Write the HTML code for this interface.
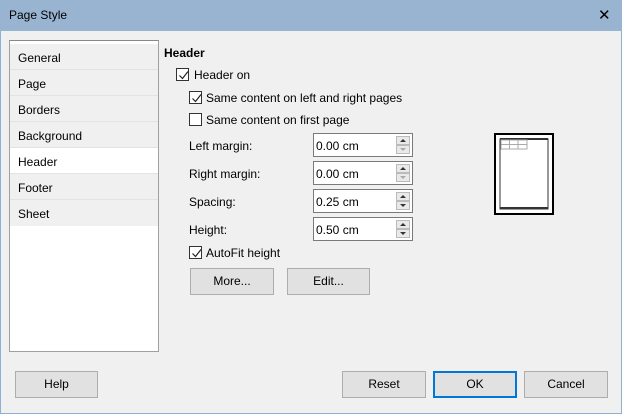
<!DOCTYPE html>
<html><head><style>
*{box-sizing:border-box;margin:0;padding:0}
body{width:622px;height:414px;background:#f0f0f0;font-family:"Liberation Sans",sans-serif;font-size:12px;color:#000;position:relative;overflow:hidden}
.win{position:absolute;left:0;top:0;width:622px;height:414px;border:1px solid #8fb0d6}
.title{position:absolute;left:0;top:0;width:622px;height:31px;background:#99b4d1}
.tt{position:absolute;left:9px;top:8px;font-size:12px}
.x{position:absolute;left:598px;top:6px;font-size:15px}
.abs{position:absolute}
.list{position:absolute;left:9px;top:40px;width:150px;height:312px;background:#fff;border:1px solid #a0a0a0;border-top:1px solid #888}
.it{position:absolute;left:0;width:148px;height:26px;background:#f0f0f0;border-bottom:1px solid #e3e3e3;padding:7px 0 0 8px}
.btn{position:absolute;height:27px;background:#e1e1e1;border:1px solid #adadad;text-align:center;line-height:25px}
.cb{position:absolute;width:13px;height:13px;border:1px solid #333;background:#fff}
.cb svg{position:absolute;left:1px;top:1px}
.inp{position:absolute;left:313px;width:100px;height:24px;border:1px solid #7a7a7a;background:#fff;padding:5px 0 0 2px}
.sp{position:absolute;right:2px;top:2px;width:14px;height:18px}
.sp div{width:14px;height:9px;background:#e9e9e9;border:1px solid #bbb;position:relative}
.sp div:after{content:"";position:absolute;left:3px;top:2px;border-left:3px solid transparent;border-right:3px solid transparent}
.u:after{border-bottom:3px solid #333}
.d:after{border-top:3px solid #333}
.g:after{border-top-color:#aaa!important}
</style></head><body>
<div class="win"></div>
<div class="title"><span class="tt">Page Style</span><span class="x">✕</span></div>
<div class="list">
<div class="it" style="top:3px">General</div>
<div class="it" style="top:29px">Page</div>
<div class="it" style="top:55px">Borders</div>
<div class="it" style="top:81px">Background</div>
<div class="it" style="top:107px;background:#fff">Header</div>
<div class="it" style="top:133px">Footer</div>
<div class="it" style="top:159px;border-bottom:none">Sheet</div>
</div>
<div class="abs" style="left:164px;top:46px;font-weight:bold">Header</div>
<div class="cb" style="left:176px;top:68px"><svg width="11" height="11"><path d="M1.5 5.5l3 3 5.5-7" stroke="#222" fill="none" stroke-width="1.2"/></svg></div>
<div class="abs" style="left:194px;top:68px">Header on</div>
<div class="cb" style="left:189px;top:91px"><svg width="11" height="11"><path d="M1.5 5.5l3 3 5.5-7" stroke="#222" fill="none" stroke-width="1.2"/></svg></div>
<div class="abs" style="left:206px;top:91px">Same content on left and right pages</div>
<div class="cb" style="left:189px;top:113px"></div>
<div class="abs" style="left:206px;top:113px">Same content on first page</div>
<div class="abs" style="left:189px;top:139px">Left margin:</div>
<div class="abs" style="left:189px;top:167px">Right margin:</div>
<div class="abs" style="left:189px;top:195px">Spacing:</div>
<div class="abs" style="left:189px;top:223px">Height:</div>
<div class="inp" style="top:133px">0.00 cm<div class="sp"><div class="u"></div><div class="d g"></div></div></div>
<div class="inp" style="top:161px">0.00 cm<div class="sp"><div class="u"></div><div class="d g"></div></div></div>
<div class="inp" style="top:189px">0.25 cm<div class="sp"><div class="u"></div><div class="d"></div></div></div>
<div class="inp" style="top:217px">0.50 cm<div class="sp"><div class="u"></div><div class="d"></div></div></div>
<div class="cb" style="left:189px;top:246px"><svg width="11" height="11"><path d="M1.5 5.5l3 3 5.5-7" stroke="#222" fill="none" stroke-width="1.2"/></svg></div>
<div class="abs" style="left:206px;top:246px">AutoFit height</div>
<div class="btn" style="left:190px;top:268px;width:84px">More...</div>
<div class="btn" style="left:287px;top:268px;width:83px">Edit...</div>
<div class="abs" style="left:494px;top:133px;width:60px;height:82px;border:2px solid #000;background:#fff">
<svg width="56" height="78" style="position:absolute;left:0;top:0"><rect x="4" y="4" width="48" height="70" fill="#fff" stroke="#333"/><rect x="4" y="3" width="48" height="2" fill="#333"/><rect x="4" y="72" width="48" height="2" fill="#333"/><path d="M5 5h26v9H5zM5 9.5h26M13.5 5v9M22 5v9" stroke="#aaa" fill="none"/></svg></div>
<div class="btn" style="left:15px;top:371px;width:83px">Help</div>
<div class="btn" style="left:342px;top:371px;width:84px">Reset</div>
<div class="btn" style="left:433px;top:371px;width:84px;border:2px solid #0078d7;line-height:23px">OK</div>
<div class="btn" style="left:524px;top:371px;width:84px">Cancel</div>
</body></html>
